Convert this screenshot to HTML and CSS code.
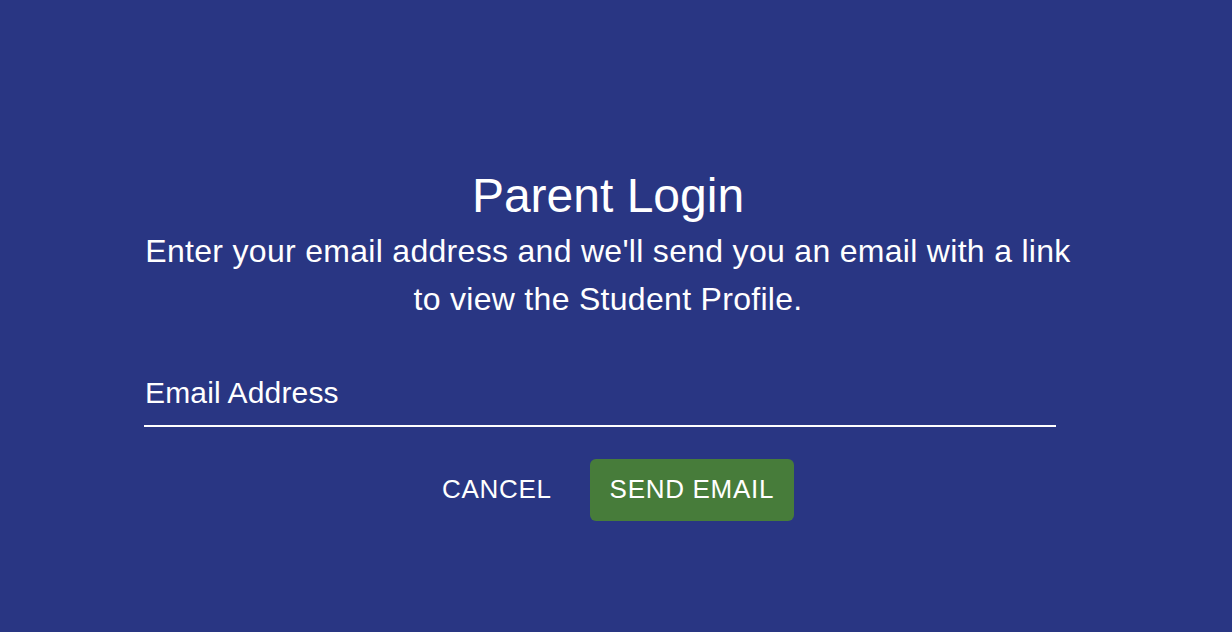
FILE: index.html
```html
<!DOCTYPE html>
<html lang="en">

<head>
    <meta charset="UTF-8">
    <title>Parent Login</title>
    <meta name=viewport content="width=device-width,initial-scale=1">
    <link rel="stylesheet" href="styles.css">
</head>

<body>
    <main class=login>
        <div class=container>
            <h1>Parent Login</h1>
            <p class=lead>Enter your email address and we'll send you an email with a link to view the Student Profile.</p>
            <div class=field>
                <input id=email type=email placeholder="Email Address">
            </div>
            <div class=actions>
                <button class="btn text">Cancel</button>
                <button class="btn primary">Send Email</button>
            </div>
        </div>
    </main>
</body>

</html>
```

FILE: styles.css
```css
* {
    margin: 0;
    padding: 0;
    border: 0;
    box-sizing: border-box;
}

html,
body {
    height: 100%;
}

body {
    font-family: "Liberation Sans", Arial, sans-serif;
    background-color: #293683;
    color: white;
}

.login {
    padding-top: 168px;
}

.container {
    margin-left: 144px;
    width: 928px;
    text-align: center;
}

h1 {
    font-size: 48px;
    font-weight: normal;
    line-height: 56px;
}

.lead {
    margin-top: 3px;
    font-size: 32px;
    line-height: 48px;
    letter-spacing: 0.3px;
}

.field {
    margin-top: 46px;
    width: 912px;
    border-bottom: 2px solid white;
    text-align: left;
}

.field input {
    font-family: inherit;
    font-size: 30px;
    line-height: 36px;
    letter-spacing: 0.15px;
    background: transparent;
    color: white;
    width: 100%;
    padding: 6px 0 14px 1px;
    outline: none;
}

.field input::placeholder {
    color: white;
    opacity: 1;
}

.actions {
    margin-top: 32px;
    display: flex;
    justify-content: center;
    gap: 18px;
}

.btn {
    font-family: inherit;
    font-size: 26px;
    letter-spacing: 0.7px;
    text-transform: uppercase;
    color: white;
    background: transparent;
    height: 62px;
    padding: 0 20px 1px;
    border-radius: 6px;
    cursor: pointer;
}

.btn.primary {
    background-color: #477c3a;
}
```
